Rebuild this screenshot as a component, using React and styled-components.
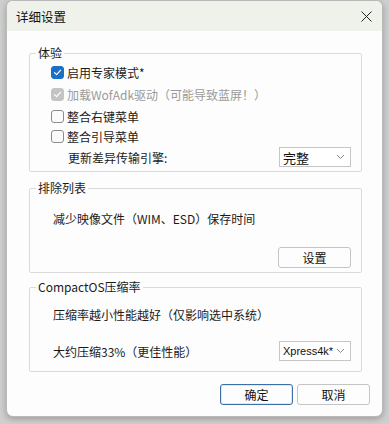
import React from "react";
import styled, { createGlobalStyle } from "styled-components";

const Global = createGlobalStyle`
  html, body { margin: 0; padding: 0; }
  body {
    background: #cfcfcf;
    font-family: "Noto Sans CJK SC", "Noto Sans", sans-serif;
    font-size: 12px;
    color: #1b1b1b;
    width: 389px;
    height: 424px;
    overflow: hidden;
  }
`;

const Page = styled.div`
  display: flex;
  padding-left: 6px;
  height: 424px;
  box-sizing: border-box;
`;

const Window = styled.div`
  width: 377px;
  height: 417px;
  background: #fdfdfd;
  border: 1px solid #b9b9b9;
  border-radius: 7px;
  box-sizing: border-box;
  overflow: hidden;
  display: flex;
  flex-direction: column;
  box-shadow: 0 2px 6px rgba(0, 0, 0, 0.25);
`;

const TitleBar = styled.div`
  height: 30px;
  background: #eef2ea;
  display: flex;
  align-items: center;
  justify-content: space-between;
  padding: 0 8px 0 9px;
  font-size: 12.5px;
  color: #111;
  flex-shrink: 0;
`;

const CloseBtn = styled.div`
  width: 14px;
  height: 14px;
  display: flex;
  align-items: center;
  justify-content: center;
  margin-right: 1px;
`;

const Body = styled.div`
  display: flex;
  flex-direction: column;
  padding: 15px 20px 0 22px;
`;

const Group = styled.fieldset`
  margin: 0 0 ${(p) => p.$gap || 0}px 0;
  padding: 0;
  border: 1px solid #dadada;
  border-radius: 2px;
  height: ${(p) => p.$h}px;
  box-sizing: border-box;
  display: flex;
  flex-direction: column;
  min-width: 0;
`;

const Legend = styled.legend`
  margin-left: 6px;
  padding: 0 2px;
  font-size: 12px;
  line-height: 14px;
  color: #1b1b1b;
`;

const Row = styled.div`
  display: flex;
  align-items: center;
  height: ${(p) => p.$h || 20}px;
  padding-left: ${(p) => p.$indent || 21}px;
  padding-right: 10px;
  color: ${(p) => (p.$disabled ? "#9a9a9a" : "#1b1b1b")};
  white-space: nowrap;
`;

const Spacer = styled.div`
  flex: 1;
`;

const Box = styled.span`
  width: 13px;
  height: 13px;
  box-sizing: border-box;
  border-radius: 3px;
  margin-right: 3px;
  display: inline-flex;
  align-items: center;
  justify-content: center;
  flex-shrink: 0;
  background: ${(p) =>
    p.$checked ? (p.$disabled ? "#c4c4c4" : "#1a6fc8") : "#fbfbfb"};
  border: 1px solid
    ${(p) => (p.$checked ? (p.$disabled ? "#c4c4c4" : "#1a6fc8") : "#8c8c8c")};
`;

const Select = styled.div`
  width: 72px;
  height: 20px;
  box-sizing: border-box;
  border: 1px solid #c6c6c6;
  background: #fff;
  display: flex;
  align-items: center;
  justify-content: space-between;
  padding: 0 5px 0 3px;
  font-size: ${(p) => p.$fs || 12}px;
  font-family: ${(p) =>
    p.$latin ? '"Liberation Sans", Arial, sans-serif' : "inherit"};
  color: #111;
`;

const Button = styled.div`
  width: 73px;
  height: 21px;
  box-sizing: border-box;
  border: 1px solid ${(p) => (p.$primary ? "#3c6fa8" : "#c4c4c4")};
  border-radius: 3px;
  background: #fdfdfd;
  display: flex;
  align-items: center;
  justify-content: center;
  font-size: 12px;
  color: #111;
  box-shadow: ${(p) => (p.$primary ? "inset 0 0 0 1px #dde8f5" : "none")};
`;

const Footer = styled.div`
  display: flex;
  justify-content: flex-end;
  gap: 4px;
  padding: 12px 12px 0 0;
`;

const Check = ({ checked, disabled }) => (
  <Box $checked={checked} $disabled={disabled}>
    {checked && (
      <svg width="9" height="9" viewBox="0 0 9 9">
        <path
          d="M1.5 4.6 L3.6 6.6 L7.6 2.2"
          fill="none"
          stroke="#fff"
          strokeWidth="1.2"
          strokeLinecap="round"
          strokeLinejoin="round"
        />
      </svg>
    )}
  </Box>
);

const Chevron = () => (
  <svg width="9" height="6" viewBox="0 0 9 6">
    <path d="M1 1 L4.5 4.5 L8 1" fill="none" stroke="#888" strokeWidth="1" />
  </svg>
);

export default function App() {
  return (
    <>
      <Global />
      <Page>
        <Window>
          <TitleBar>
            <span>详细设置</span>
            <CloseBtn>
              <svg width="11" height="11" viewBox="0 0 11 11">
                <path d="M0.5 0.5 L10.5 10.5 M10.5 0.5 L0.5 10.5" stroke="#222" strokeWidth="1" />
              </svg>
            </CloseBtn>
          </TitleBar>
          <Body>
            <Group $h={126} $gap={9}>
              <Legend>体验</Legend>
              <Row $h={20} style={{ marginTop: 2 }}>
                <Check checked />
                启用专家模式*
              </Row>
              <Row $h={24} $disabled>
                <Check checked disabled />
                加载WofAdk驱动（可能导致蓝屏！）
              </Row>
              <Row $h={20}>
                <Check />
                整合右键菜单
              </Row>
              <Row $h={20}>
                <Check />
                整合引导菜单
              </Row>
              <Row $h={22} $indent={38}>
                更新差异传输引擎:
                <Spacer />
                <Select $fs={13}>
                  完整
                  <Chevron />
                </Select>
              </Row>
            </Group>
            <Group $h={92} $gap={7}>
              <Legend>排除列表</Legend>
              <Row $h={22} $indent={23} style={{ marginTop: 12 }}>
                减少映像文件（WIM、ESD）保存时间
              </Row>
              <Row $h={21} style={{ marginTop: 18 }}>
                <Spacer />
                <Button>设置</Button>
              </Row>
            </Group>
            <Group $h={92}>
              <Legend>CompactOS压缩率</Legend>
              <Row $h={22} $indent={23} style={{ marginTop: 9 }}>
                压缩率越小性能越好（仅影响选中系统）
              </Row>
              <Row $h={22} $indent={23} style={{ marginTop: 15 }}>
                大约压缩33%（更佳性能）
                <Spacer />
                <Select $fs={11} $latin>
                  Xpress4k*
                  <Chevron />
                </Select>
              </Row>
            </Group>
          </Body>
          <Footer>
            <Button $primary>确定</Button>
            <Button>取消</Button>
          </Footer>
        </Window>
      </Page>
    </>
  );
}
